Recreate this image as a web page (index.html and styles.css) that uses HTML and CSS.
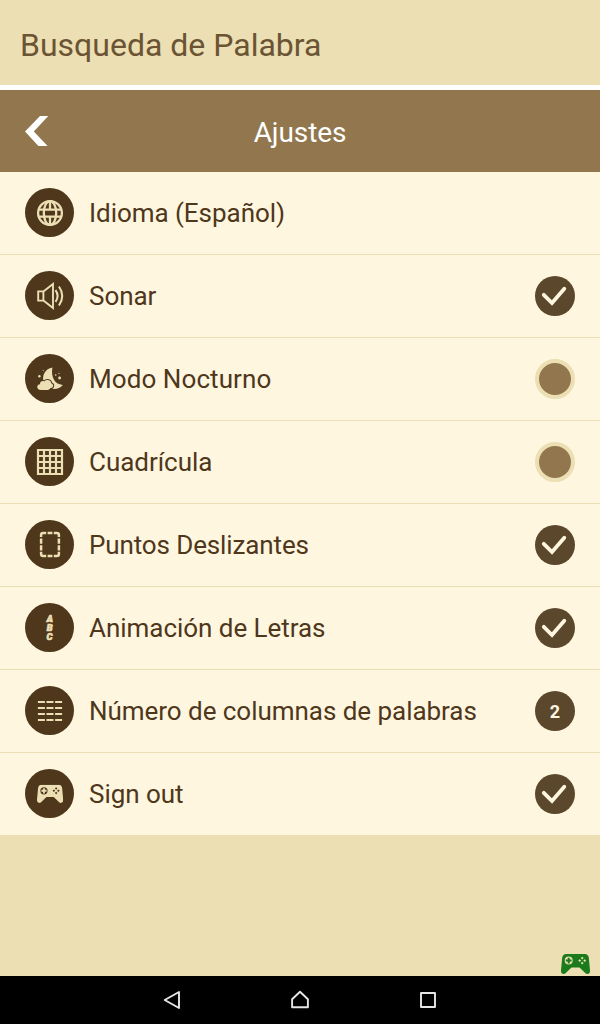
FILE: index.html
```
<!DOCTYPE html>
<html lang="es">
<head>
    <meta charset="UTF-8">
    <meta name="viewport" content="width=device-width, initial-scale=1.0">
    <title>Busqueda de Palabra</title>
    <link rel="stylesheet" href="styles.css">
</head>
<body>
    <svg class="symbols" width="0" height="0">
        <symbol id="check" viewBox="0 0 40 40">
            <path d="M8.8 18.8L17 27L29.3 12.8" fill="none" stroke="#fff6e0" stroke-width="3.8" stroke-linecap="round" stroke-linejoin="miter"/>
        </symbol>
        <symbol id="gamepad" viewBox="0 0 29 20">
            <path fill="currentColor" fill-rule="evenodd" d="M5 0H24Q27 0 27.8 3.5L29 16.5Q29.2 20 26.3 20Q25.3 20 24.5 19.2L18.5 13.6H10.5L4.5 19.2Q3.7 20 2.7 20Q-.2 20 0 16.5L1.2 3.5Q2 0 5 0Z
                M7.7 2.6A4 4 0 1 0 7.7 10.6A4 4 0 1 0 7.7 2.6Z"/>
            <path fill="currentColor" d="M6.7 3.7H8.7V5.6H10.6V7.6H8.7V9.5H6.7V7.6H4.8V5.6H6.7Z"/>
            <path class="holes" d="M21.2 2.7L22.6 4.1L21.2 5.5L19.8 4.1ZM21.2 7.7L22.6 9.1L21.2 10.5L19.8 9.1ZM18.7 5.2L20.1 6.6L18.7 8L17.3 6.6ZM23.7 5.2L25.1 6.6L23.7 8L22.3 6.6Z"/>
        </symbol>
    </svg>

    <header class="appbar">Busqueda de Palabra</header>

    <div class="titlebar">
        <svg class="back" width="24" height="30" viewBox="0 0 24 30"><path d="M15 0H23.3L8.8 15.6L22.6 30H13.4L0 15.6Z" fill="#fff"/></svg>
        <h1>Ajustes</h1>
    </div>

    <ul class="settings">
        <li>
            <svg class="icon" viewBox="0 0 50 50">
                <circle class="disc" cx="24.5" cy="24.5" r="24.5"/>
                <g class="line" stroke-width="2.3">
                    <circle cx="25" cy="25" r="11.9"/>
                    <ellipse cx="25" cy="25" rx="6.2" ry="11.9"/>
                    <path d="M14 21.6H36M14 28.6H36M25 13V21M25 29V37"/>
                </g>
            </svg>
            <span class="label">Idioma (Español)</span>
        </li>
        <li>
            <svg class="icon" viewBox="0 0 50 50">
                <circle class="disc" cx="24.5" cy="24.5" r="24.5"/>
                <g class="line" stroke-width="1.9">
                    <path d="M13.2 20.4H18.4V29.6H13.2ZM18.4 20.4L28 13V37L18.4 29.6"/>
                    <path d="M30.5 19.2Q34.7 25 30.5 30.8M34 15.5Q40.5 25 34 34.5" stroke-width="2"/>
                </g>
            </svg>
            <span class="label">Sonar</span>
            <span class="toggle on"><svg><use href="#check"/></svg></span>
        </li>
        <li>
            <svg class="icon" viewBox="0 0 50 50">
                <circle class="disc" cx="24.5" cy="24.5" r="24.5"/>
                <path class="fill" d="M27.4 13.6C25.8 22 29 30.5 37.8 31C33.5 36.5 23.5 36.5 19.3 29.5C15.8 22 20.5 14.6 27.4 13.6Z"/>
                <path class="cloud" d="M16 36C11.4 36 11 30.6 15 30.2C14.8 27.4 17.6 26.4 19.4 27.4C21.6 24.8 26 26 26.2 29.2C29.2 30.2 28.6 34 25.4 34C24.6 35.8 22.6 36.4 21 36Z"/>
                <g class="fill">
                    <circle cx="14.4" cy="22.3" r="1.2"/>
                    <circle cx="34.6" cy="24" r="1.4"/>
                    <circle cx="18.2" cy="16.4" r=".5"/>
                    <circle cx="30.7" cy="21" r=".8"/>
                    <circle cx="34" cy="19.3" r=".6"/>
                </g>
            </svg>
            <span class="label modo">Modo Nocturno</span>
            <span class="toggle"></span>
        </li>
        <li>
            <svg class="icon" viewBox="0 0 50 50">
                <circle class="disc" cx="24.5" cy="24.5" r="24.5"/>
                <path class="line" stroke-width="2.2" d="M13 13H37V37H13ZM19 13V37M25 13V37M31 13V37M13 19H37M13 25H37M13 31H37"/>
            </svg>
            <span class="label">Cuadrícula</span>
            <span class="toggle"></span>
        </li>
        <li>
            <svg class="icon" viewBox="0 0 50 50">
                <circle class="disc" cx="24.5" cy="24.5" r="24.5"/>
                <path class="line" stroke-width="2.5" d="M16.1 17V15Q16.1 13 18.1 13H21.2M22.6 13H27.4M28.8 13H31.9Q33.9 13 33.9 15V17M33.9 18.4V23.8M33.9 25.2V30.4M33.9 31.8V34Q33.9 36 31.9 36H28.8M27.4 36H22.6M21.2 36H18.1Q16.1 36 16.1 34V31.8M16.1 30.4V25.2M16.1 23.8V18.4"/>
            </svg>
            <span class="label tight">Puntos Deslizantes</span>
            <span class="toggle on"><svg><use href="#check"/></svg></span>
        </li>
        <li>
            <svg class="icon" viewBox="0 0 50 50">
                <circle class="disc" cx="24.5" cy="24.5" r="24.5"/>
                <g class="abc">
                    <text x="24.8" y="19.4">A</text>
                    <text x="24.6" y="28.1">B</text>
                    <text x="24.6" y="36.8">C</text>
                </g>
            </svg>
            <span class="label">Animación de Letras</span>
            <span class="toggle on"><svg><use href="#check"/></svg></span>
        </li>
        <li>
            <svg class="icon" viewBox="0 0 50 50">
                <circle class="disc" cx="24.5" cy="24.5" r="24.5"/>
                <path class="line" stroke-width="2.2" stroke-dasharray="7 1.6" d="M12.9 16H37.1M12.9 22H37.1M12.9 28H37.1M12.9 34H37.1"/>
            </svg>
            <span class="label">Número de columnas de palabras</span>
            <span class="toggle on">2</span>
        </li>
        <li>
            <svg class="icon" viewBox="0 0 50 50">
                <circle class="disc" cx="24.5" cy="24.5" r="24.5"/>
                <use class="pad" href="#gamepad" x="12" y="15.8" width="26.2" height="18.1"/>
            </svg>
            <span class="label">Sign out</span>
            <span class="toggle on"><svg><use href="#check"/></svg></span>
        </li>
    </ul>

    <footer class="status">
        <svg class="player" width="29" height="20"><use href="#gamepad"/></svg>
    </footer>

    <nav class="navbar">
        <svg viewBox="0 0 24 24"><path d="M19 4V20L4.7 12Z"/></svg>
        <svg viewBox="0 0 24 24"><path d="M12 3.8L19.9 11.3V19.2H4.1V11.3Z"/></svg>
        <svg viewBox="0 0 24 24"><path d="M5 5H19V19H5Z"/></svg>
    </nav>
</body>
</html>
```
FILE: styles.css
```
* {
    box-sizing: border-box;
}

body {
    display: flex;
    flex-direction: column;
    height: 1024px;
    margin: 0;
    background-color: #ecdfb4;
    font-family: Roboto, sans-serif;
    color: #4e371b;
}

.symbols {
    position: absolute;
}

.appbar {
    height: 90px;
    padding-left: 20px;
    border-bottom: 5px solid #fff;
    color: #6b5433;
    font-size: 32px;
    line-height: 90px;
}

.titlebar {
    display: grid;
    grid-template-columns: 75px 1fr 75px;
    align-items: center;
    height: 82px;
    background-color: #92774e;
    color: #fff;
}

.titlebar h1 {
    margin: 2px 0 0;
    font-size: 28px;
    font-weight: 400;
    letter-spacing: -0.1px;
    text-align: center;
}

.back {
    margin-left: 25px;
}

.settings {
    margin: 0;
    padding: 0;
    list-style: none;
    background-color: #fff6e0;
}

.settings li {
    display: flex;
    align-items: center;
    height: 83px;
    padding: 0 25px;
    border-bottom: 1px solid #ecdfb4;
}

.icon {
    width: 50px;
    height: 50px;
}

.label {
    flex: 1;
    margin-left: 14px;
    font-size: 26px;
    letter-spacing: -0.04px;
}

.label.modo {
    letter-spacing: 0.08px;
}

.label.tight {
    letter-spacing: -0.12px;
}

.disc {
    fill: #4e371b;
}

.fill {
    fill: #ecdfb4;
}

.line {
    fill: none;
    stroke: #ecdfb4;
}

.cloud {
    fill: #ecdfb4;
    stroke: #4e371b;
    stroke-width: 2;
    paint-order: stroke;
}

.abc {
    fill: #ecdfb4;
    stroke: #ecdfb4;
    stroke-width: 0.7;
    font: italic 900 9.4px Roboto, sans-serif;
    text-anchor: middle;
}

.pad {
    color: #ecdfb4;
    fill: #4e371b;
}

.toggle {
    display: flex;
    align-items: center;
    justify-content: center;
    width: 40px;
    height: 40px;
    border: 4px solid #ecdfb4;
    border-radius: 50%;
    background-color: #92774e;
}

.toggle.on {
    border: 0;
    background-color: #5b472b;
    color: #fff6e0;
    font-size: 18px;
    font-weight: 700;
}

.toggle svg {
    width: 40px;
    height: 40px;
}

.status {
    display: flex;
    flex: 1;
    align-items: flex-end;
    justify-content: flex-end;
    padding: 0 10px 2px;
}

.player {
    color: #1b7a1b;
    fill: #ecdfb4;
}

.navbar {
    display: flex;
    align-items: center;
    justify-content: center;
    gap: 104px;
    height: 48px;
    background-color: #000;
}

.navbar svg {
    width: 24px;
    height: 24px;
    fill: none;
    stroke: #e6e6e6;
    stroke-width: 1.9;
    stroke-linejoin: round;
}
```
